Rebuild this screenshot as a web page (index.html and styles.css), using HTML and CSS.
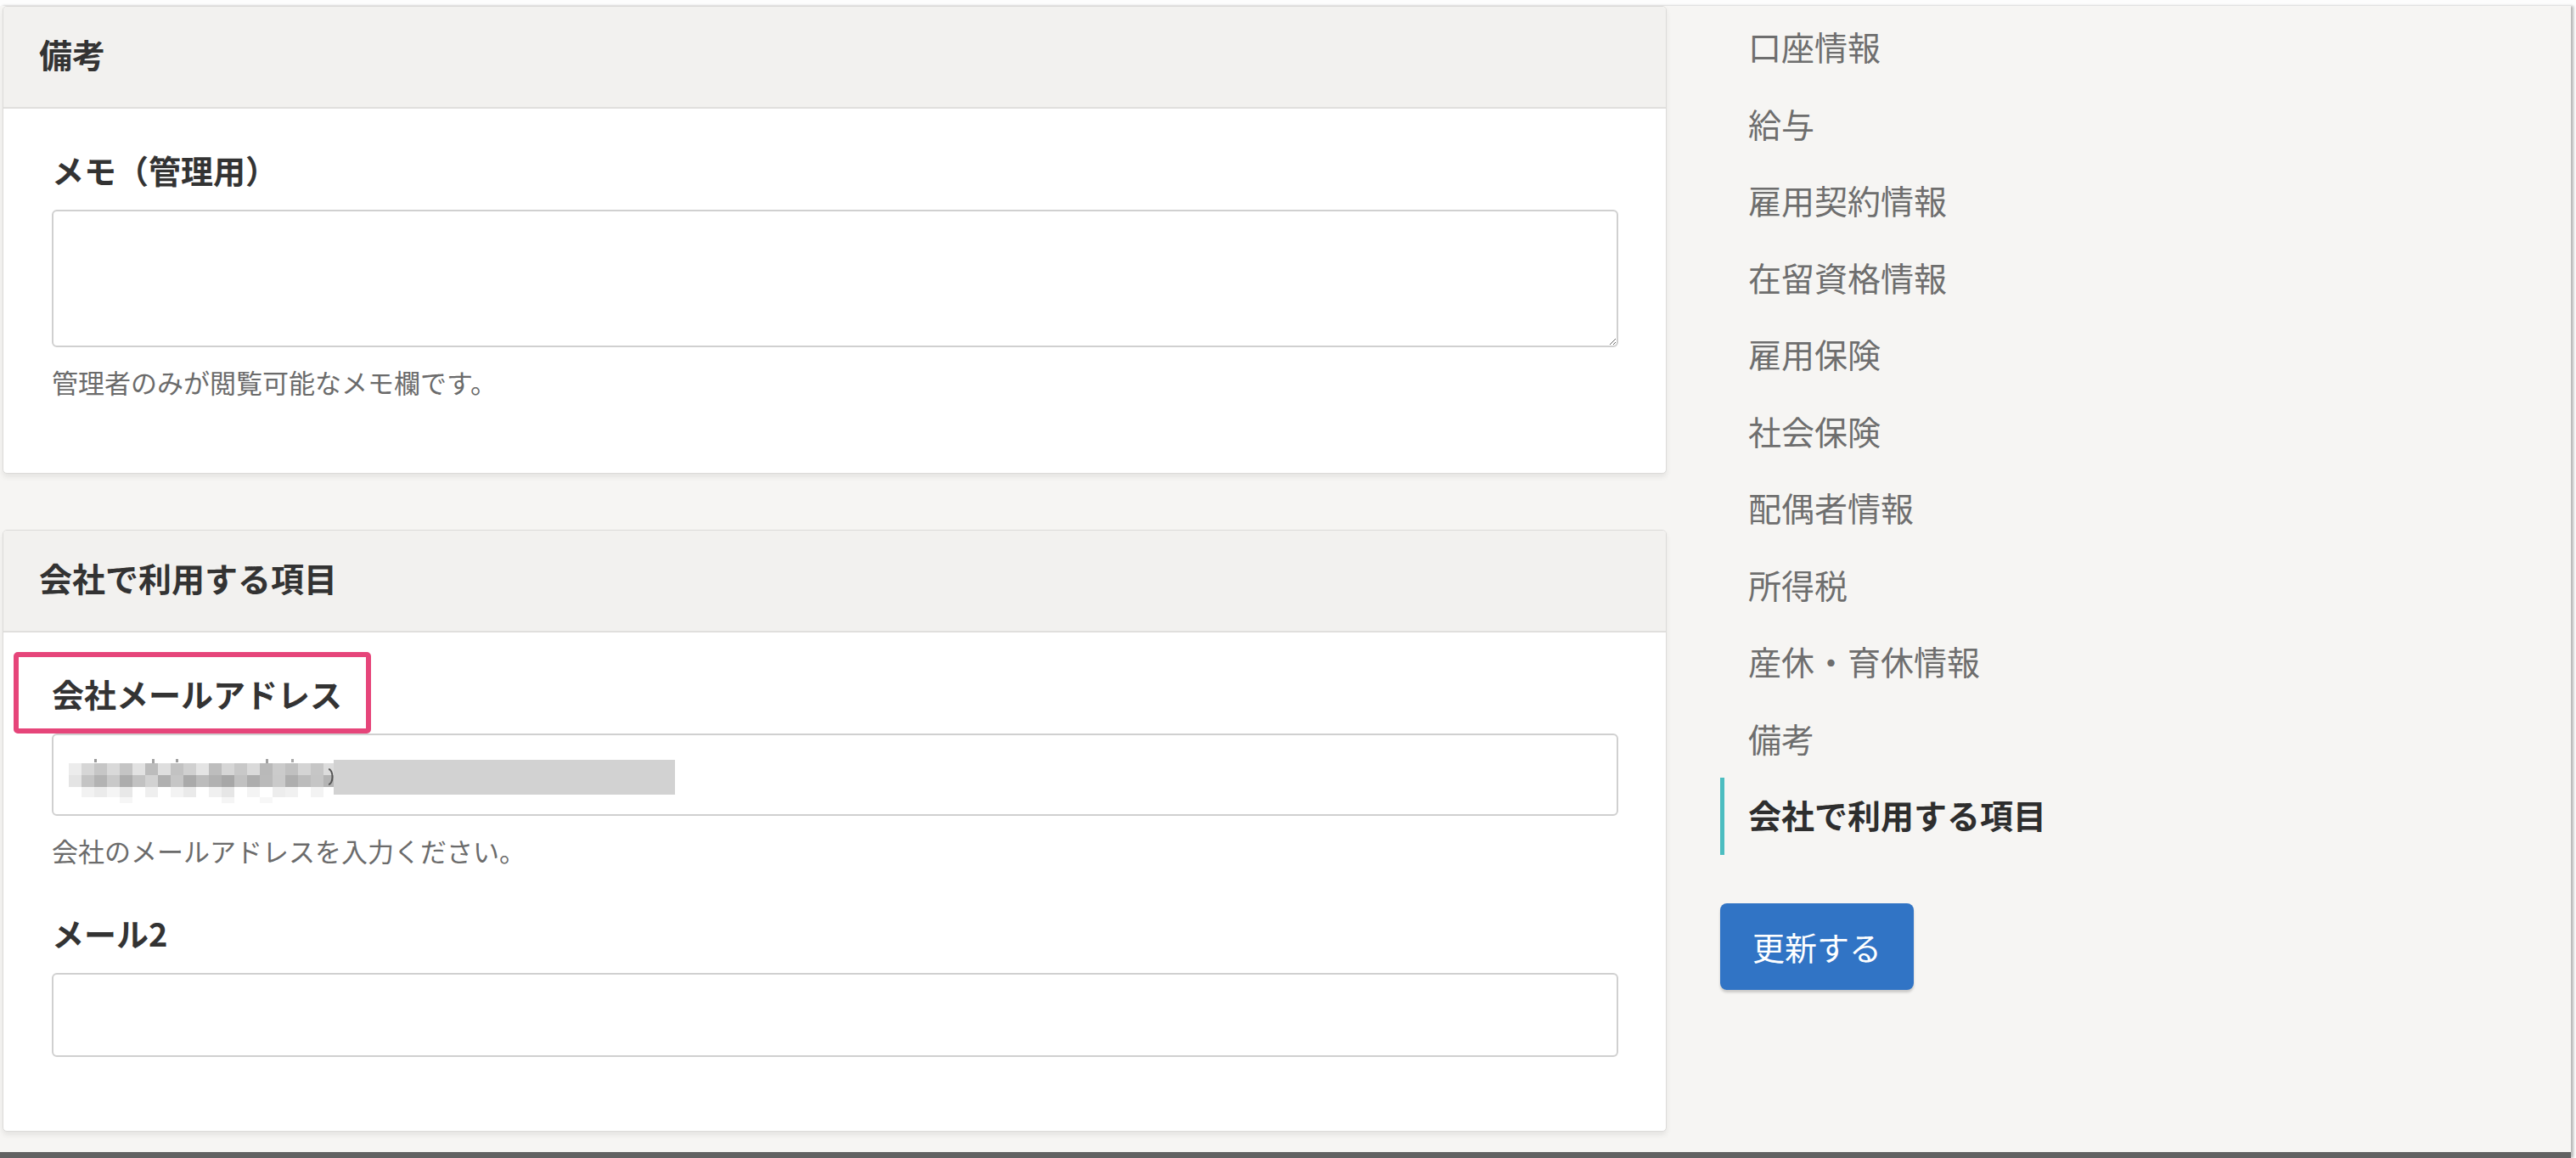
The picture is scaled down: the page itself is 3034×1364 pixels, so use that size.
FILE: index.html
```html
<!DOCTYPE html>
<html lang="ja">
<head>
    <meta charset="UTF-8">
    <meta name="viewport" content="width=device-width, initial-scale=1.0">
    <title>従業員情報の編集</title>
    <link rel="stylesheet" href="styles.css">
</head>
<body>
    <div class="app">
        <main class="main">
            <section class="card">
                <div class="card-header">備考</div>
                <div class="card-body">
                    <div class="field">
                        <label class="field-label" for="memo">メモ（管理用）</label>
                        <textarea id="memo" class="form-control form-textarea"></textarea>
                        <p class="help">管理者のみが閲覧可能なメモ欄です。</p>
                    </div>
                </div>
            </section>

            <section class="card">
                <div class="card-header">会社で利用する項目</div>
                <div class="card-body">
                    <div class="field">
                        <label class="field-label"><span class="is-marked">会社メールアドレス</span></label>
                        <!-- address is masked on screen -->
                        <div class="form-control is-filled">
                            <svg class="mosaic" width="312" height="52" viewBox="0 0 312 52">
                                <rect x="30" y="0" width="3" height="4" fill="#9a9a9a"/>
                                <rect x="98" y="0" width="3" height="5" fill="#a4a4a4"/>
                                <rect x="126" y="0" width="3" height="4" fill="#9e9e9e"/>
                                <rect x="232" y="0" width="3" height="5" fill="#a0a0a0"/>
                                <rect x="262" y="0" width="3" height="4" fill="#a8a8a8"/>
                                <g>
                                    <rect x="0" y="5" width="15" height="14" fill="#ececec"/>
                                    <rect x="15" y="5" width="15" height="14" fill="#d6d6d6"/>
                                    <rect x="30" y="5" width="15" height="14" fill="#c6c6c6"/>
                                    <rect x="45" y="5" width="15" height="14" fill="#d9d9d9"/>
                                    <rect x="60" y="5" width="15" height="14" fill="#c4c4c4"/>
                                    <rect x="75" y="5" width="15" height="14" fill="#e2e2e2"/>
                                    <rect x="90" y="5" width="15" height="14" fill="#bcbcbc"/>
                                    <rect x="105" y="5" width="15" height="14" fill="#dedede"/>
                                    <rect x="120" y="5" width="15" height="14" fill="#c2c2c2"/>
                                    <rect x="135" y="5" width="15" height="14" fill="#d0d0d0"/>
                                    <rect x="150" y="5" width="15" height="14" fill="#e4e4e4"/>
                                    <rect x="165" y="5" width="15" height="14" fill="#bdbdbd"/>
                                    <rect x="180" y="5" width="15" height="14" fill="#d6d6d6"/>
                                    <rect x="195" y="5" width="15" height="14" fill="#c8c8c8"/>
                                    <rect x="210" y="5" width="15" height="14" fill="#dadada"/>
                                    <rect x="225" y="5" width="15" height="14" fill="#b9b9b9"/>
                                    <rect x="240" y="5" width="15" height="14" fill="#cbcbcb"/>
                                    <rect x="255" y="5" width="15" height="14" fill="#c0c0c0"/>
                                    <rect x="270" y="5" width="15" height="14" fill="#d4d4d4"/>
                                    <rect x="285" y="5" width="15" height="14" fill="#c6c6c6"/>
                                    <rect x="300" y="5" width="12" height="14" fill="#dcdcdc"/>
                                </g>
                                <g>
                                    <rect x="0" y="19" width="15" height="14" fill="#e4e4e4"/>
                                    <rect x="15" y="19" width="15" height="14" fill="#c4c4c4"/>
                                    <rect x="30" y="19" width="15" height="14" fill="#b3b3b3"/>
                                    <rect x="45" y="19" width="15" height="14" fill="#c9c9c9"/>
                                    <rect x="60" y="19" width="15" height="14" fill="#acacac"/>
                                    <rect x="75" y="19" width="15" height="14" fill="#c2c2c2"/>
                                    <rect x="90" y="19" width="15" height="14" fill="#d2d2d2"/>
                                    <rect x="105" y="19" width="15" height="14" fill="#b0b0b0"/>
                                    <rect x="120" y="19" width="15" height="14" fill="#c6c6c6"/>
                                    <rect x="135" y="19" width="15" height="14" fill="#aaaaaa"/>
                                    <rect x="150" y="19" width="15" height="14" fill="#bcbcbc"/>
                                    <rect x="165" y="19" width="15" height="14" fill="#b1b1b1"/>
                                    <rect x="180" y="19" width="15" height="14" fill="#a7a7a7"/>
                                    <rect x="195" y="19" width="15" height="14" fill="#c1c1c1"/>
                                    <rect x="210" y="19" width="15" height="14" fill="#adadad"/>
                                    <rect x="225" y="19" width="15" height="14" fill="#bababa"/>
                                    <rect x="240" y="19" width="15" height="14" fill="#cacaca"/>
                                    <rect x="255" y="19" width="15" height="14" fill="#aeaeae"/>
                                    <rect x="270" y="19" width="15" height="14" fill="#bcbcbc"/>
                                    <rect x="285" y="19" width="15" height="14" fill="#c5c5c5"/>
                                    <rect x="300" y="19" width="12" height="14" fill="#b4b4b4"/>
                                </g>
                                <g>
                                    <rect x="15" y="33" width="15" height="12" fill="#f2f2f2"/>
                                    <rect x="30" y="33" width="15" height="12" fill="#ebebeb"/>
                                    <rect x="45" y="33" width="15" height="12" fill="#f5f5f5"/>
                                    <rect x="60" y="33" width="15" height="12" fill="#e8e8e8"/>
                                    <rect x="90" y="33" width="15" height="12" fill="#efefef"/>
                                    <rect x="120" y="33" width="15" height="12" fill="#f3f3f3"/>
                                    <rect x="135" y="33" width="15" height="12" fill="#eaeaea"/>
                                    <rect x="165" y="33" width="15" height="12" fill="#f0f0f0"/>
                                    <rect x="180" y="33" width="15" height="12" fill="#e6e6e6"/>
                                    <rect x="210" y="33" width="15" height="12" fill="#f4f4f4"/>
                                    <rect x="240" y="33" width="15" height="12" fill="#ededed"/>
                                    <rect x="255" y="33" width="15" height="12" fill="#f1f1f1"/>
                                    <rect x="285" y="33" width="15" height="12" fill="#f3f3f3"/>
                                </g>
                                <rect x="60" y="45" width="15" height="7" fill="#f6f6f6"/>
                                <rect x="180" y="45" width="15" height="7" fill="#f5f5f5"/>
                                <rect x="225" y="45" width="15" height="7" fill="#f7f7f7"/>
                                <path d="M306 12 a4 8 0 0 1 0 18" fill="none" stroke="#555" stroke-width="2"/>
                            </svg>
                            <span class="redact-block"></span>
                        </div>
                        <p class="help">会社のメールアドレスを入力ください。</p>
                    </div>

                    <div class="field">
                        <label class="field-label" for="mail2">メール2</label>
                        <input id="mail2" class="form-control form-input-tall" type="text">
                    </div>
                </div>
            </section>
        </main>

        <aside class="sidebar">
            <nav class="side-nav">
                <a class="nav-item">口座情報</a>
                <a class="nav-item">給与</a>
                <a class="nav-item">雇用契約情報</a>
                <a class="nav-item">在留資格情報</a>
                <a class="nav-item">雇用保険</a>
                <a class="nav-item">社会保険</a>
                <a class="nav-item">配偶者情報</a>
                <a class="nav-item">所得税</a>
                <a class="nav-item">産休・育休情報</a>
                <a class="nav-item">備考</a>
                <a class="nav-item is-active">会社で利用する項目</a>
            </nav>
            <button class="btn-primary" type="button">更新する</button>
        </aside>
    </div>
</body>
</html>
```

FILE: styles.css
```css
:root {
    --color-text: #333333;
    --color-muted: #6b6b6b;
    --color-nav: #6e6e6e;
    --color-page: #f6f5f3;
    --color-header: #f2f1ef;
    --color-border: #dcdbd9;
    --color-input-border: #d0d0d0;
    --color-accent: #4cbdc0;
    --color-primary: #3174c5;
    --color-mark: #e6457a;
}

* {
    margin: 0;
    padding: 0;
    box-sizing: border-box;
}

html,
body {
    height: 100%;
}

body {
    background: #fdfdfd;
    padding: 7px 6px 0 0;
    font-family: "Noto Sans CJK JP", "Noto Sans", sans-serif;
    color: var(--color-text);
    overflow: hidden;
}

.app {
    display: flex;
    height: 1357px;
    background: var(--color-page);
    border-bottom: 7px solid #626262;
    box-shadow: 3px 0 3px rgba(0,0,0,0.28);
}

.main {
    width: 1963px;
    flex-shrink: 0;
    padding-left: 3px;
}

.card {
    background: #fff;
    border: 1px solid var(--color-border);
    border-radius: 5px;
    box-shadow: 0 4px 6px rgba(0,0,0,0.07);
    margin-bottom: 66px;
    overflow: hidden;
}

.card-header {
    display: flex;
    align-items: center;
    height: 120px;
    padding: 0 0 8px 42px;
    background: var(--color-header);
    border-bottom: 2px solid #e0dfdd;
    font-size: 39px;
    font-weight: 700;
    line-height: 48px;
}

.card-body {
    padding: 48px 56px 87px 57px;
}

.field + .field {
    margin-top: 53px;
}

.field-label {
    display: block;
    font-size: 38px;
    font-weight: 700;
    line-height: 48px;
    margin-bottom: 23px;
}

.is-marked {
    position: relative;
    display: inline-block;
}

.is-marked::after {
    content: "";
    position: absolute;
    top: -25px;
    bottom: -23px;
    left: -45px;
    right: -34px;
    border: 6px solid var(--color-mark);
    border-radius: 5px;
}

.form-control {
    display: block;
    width: 100%;
    height: 97px;
    padding: 0 18px;
    background: #fff;
    border: 2px solid var(--color-input-border);
    border-radius: 6px;
    font: inherit;
    font-size: 32px;
    color: var(--color-text);
    outline: none;
}

.form-textarea {
    height: 162px;
    padding: 14px 18px;
    resize: vertical;
}

.form-input-tall {
    height: 99px;
}

.is-filled {
    display: flex;
    align-items: flex-start;
    padding-top: 28px;
}

.mosaic {
    display: block;
    flex-shrink: 0;
}

.redact-block {
    display: block;
    width: 402px;
    height: 41px;
    margin-top: 1px;
    background: #d2d2d2;
}

.help {
    margin-top: 21px;
    font-size: 31px;
    line-height: 40px;
    color: var(--color-muted);
}

.sidebar {
    flex: 1;
    padding: 4px 0 0 63px;
}

.side-nav {
    display: flex;
    flex-direction: column;
}

.nav-item {
    display: flex;
    align-items: center;
    height: 90.5px;
    padding: 0 0 4px 28px;
    border-left: 5px solid transparent;
    font-size: 39px;
    line-height: 48px;
    color: var(--color-nav);
    text-decoration: none;
    cursor: pointer;
}

.nav-item.is-active {
    border-left-color: var(--color-accent);
    color: #2e2e2e;
    font-weight: 700;
}

.btn-primary {
    display: block;
    width: 228px;
    height: 102px;
    margin-top: 57px;
    background: var(--color-primary);
    color: #fff;
    border: none;
    border-radius: 8px;
    box-shadow: 0 3px 3px rgba(0,0,0,0.18);
    font: inherit;
    font-size: 38px;
    cursor: pointer;
}
```
